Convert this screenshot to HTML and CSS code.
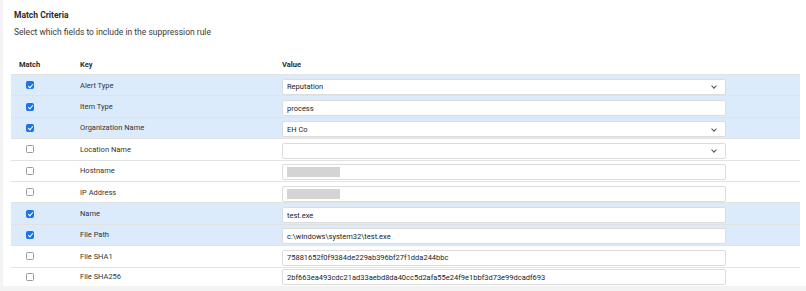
FILE: index.html
```html
<!DOCTYPE html>
<html>
<head>
<meta charset="utf-8">
<link rel="stylesheet" href="styles.css">
</head>
<body>
<div class="card">
  <div class="title">Match Criteria</div>
  <div class="subtitle">Select which fields to include in the suppression rule</div>
  <div class="table">
    <div class="head">
      <div class="c-match">Match</div>
      <div class="c-key">Key</div>
      <div class="c-val">Value</div>
    </div>
    <div class="row sel">
      <div class="c-match"><span class="cb on"></span></div>
      <div class="c-key">Alert Type</div>
      <div class="c-val"><div class="field">Reputation<span class="chev"></span></div></div>
    </div>
    <div class="row sel">
      <div class="c-match"><span class="cb on"></span></div>
      <div class="c-key">Item Type</div>
      <div class="c-val"><div class="field">process</div></div>
    </div>
    <div class="row sel">
      <div class="c-match"><span class="cb on"></span></div>
      <div class="c-key">Organization Name</div>
      <div class="c-val"><div class="field">EH Co<span class="chev"></span></div></div>
    </div>
    <div class="row">
      <div class="c-match"><span class="cb"></span></div>
      <div class="c-key">Location Name</div>
      <div class="c-val"><div class="field"><span class="chev"></span></div></div>
    </div>
    <div class="row">
      <div class="c-match"><span class="cb"></span></div>
      <div class="c-key">Hostname</div>
      <div class="c-val"><div class="field"><span class="redact"></span></div></div>
    </div>
    <div class="row">
      <div class="c-match"><span class="cb"></span></div>
      <div class="c-key">IP Address</div>
      <div class="c-val"><div class="field"><span class="redact"></span></div></div>
    </div>
    <div class="row sel">
      <div class="c-match"><span class="cb on"></span></div>
      <div class="c-key">Name</div>
      <div class="c-val"><div class="field">test.exe</div></div>
    </div>
    <div class="row sel">
      <div class="c-match"><span class="cb on"></span></div>
      <div class="c-key">File Path</div>
      <div class="c-val"><div class="field">c:\windows\system32\test.exe</div></div>
    </div>
    <div class="row">
      <div class="c-match"><span class="cb"></span></div>
      <div class="c-key">File SHA1</div>
      <div class="c-val"><div class="field">75881652f0f9384de229ab396bf27f1dda244bbc</div></div>
    </div>
    <div class="row last">
      <div class="c-match"><span class="cb"></span></div>
      <div class="c-key">File SHA256</div>
      <div class="c-val"><div class="field">2bf663ea493cdc21ad33aebd8da40cc5d2afa55e24f9e1bbf3d73e99dcadf693</div></div>
    </div>
  </div>
</div>
</body>
</html>
```

FILE: styles.css
```css
html, body {
  margin: 0;
  padding: 0;
  background: #f3f3f3;
  height: 291px;
  overflow: hidden;
}
body {
  font-family: Roboto, "Liberation Sans", sans-serif;
  color: #333;
}
.card {
  margin-left: 3px;
  background: #fff;
  height: 286px;
  padding: 9px 0 0 11px;
  box-sizing: border-box;
  overflow: hidden;
}
.title {
  font-weight: 700;
  font-size: 8.5px;
  line-height: 12px;
  color: #2b2b2b;
}
.subtitle {
  font-size: 8.5px;
  line-height: 12px;
  margin-top: 5px;
  color: #3a3a3a;
}
.table {
  margin-top: 16px;
  margin-left: -3px;
  width: 789px;
}
.head, .row {
  display: grid;
  grid-template-columns: 69px 202px 444px 1fr;
  align-items: center;
}
.head {
  height: 20px;
  font-size: 7.5px;
  font-weight: 700;
  color: #2b2b2b;
}
.head .c-match { padding-left: 8px; }
.row {
  height: 21.4px;
  border-top: 1.5px solid #e2e2e2;
  box-sizing: border-box;
  font-size: 7.5px;
}
.row.last { height: 19px; }
.row.sel { background: #dbebfc; }
.row .c-match { padding-left: 15px; display: flex; align-items: center; }
.c-key { color: #333; }
.c-val { grid-column: 3; }
.row .c-val { padding-top: 3px; }
.row.last .c-val { padding-top: 1px; }
.cb {
  width: 8px;
  height: 8px;
  box-sizing: border-box;
  border: 1px solid #9a9a9a;
  border-radius: 1.5px;
  background: #fff;
  display: inline-block;
  position: relative;
}
.cb.on {
  background: #1a73e8;
  border-color: #1a73e8;
}
.cb.on::after {
  content: "";
  position: absolute;
  left: 1.5px;
  top: 0.5px;
  width: 2px;
  height: 4px;
  border: solid #fff;
  border-width: 0 1.2px 1.2px 0;
  transform: rotate(40deg);
}
.field {
  height: 16px;
  box-sizing: border-box;
  border: 1px solid #dcdcdc;
  border-radius: 2px;
  background: #fff;
  display: flex;
  align-items: center;
  padding-left: 4px;
  color: #222;
  position: relative;
  font-size: 7.5px;
}
.chev {
  position: absolute;
  right: 9px;
  top: 4.5px;
  width: 3px;
  height: 3px;
  border: solid #44546a;
  border-width: 0 1px 1px 0;
  transform: rotate(45deg);
}
.redact {
  display: inline-block;
  width: 53px;
  height: 10px;
  background: #d4d4d4;
}
```
